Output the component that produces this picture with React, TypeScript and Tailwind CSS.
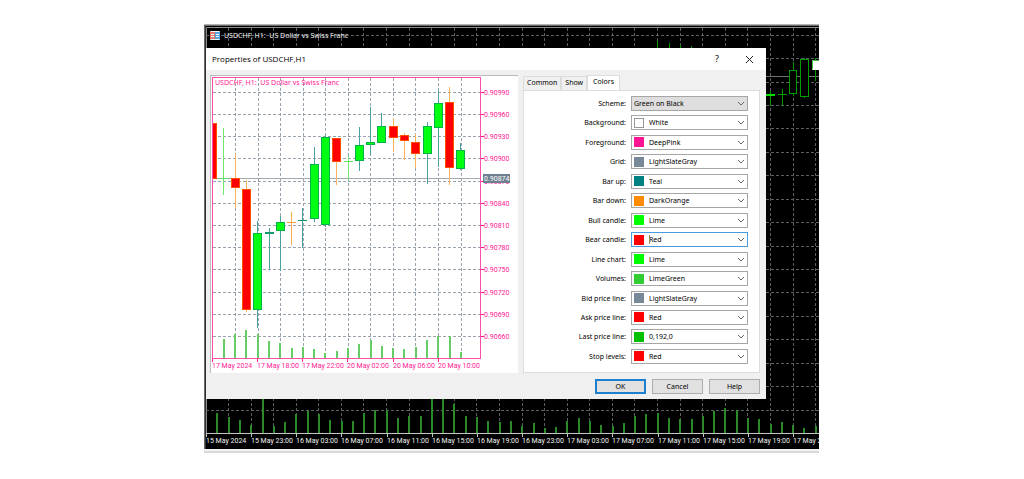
import { useState } from "react";

type Candle = { x: number; hi: number; lo: number; top: number; bottom: number; kind: "up" | "down" | "flat" | "lime" | "orange" };

const previewCandles: Candle[] = [
  { x: 223, hi: 128, lo: 195, top: 178, bottom: 179, kind: "lime" },
  { x: 235, hi: 154, lo: 208, top: 178, bottom: 188, kind: "down" },
  { x: 246, hi: 180, lo: 312, top: 189, bottom: 310, kind: "down" },
  { x: 257, hi: 221, lo: 328, top: 233, bottom: 310, kind: "up" },
  { x: 269, hi: 228, lo: 270, top: 232, bottom: 234, kind: "flat" },
  { x: 280, hi: 216, lo: 271, top: 222, bottom: 231, kind: "up" },
  { x: 291, hi: 212, lo: 245, top: 222, bottom: 223, kind: "orange" },
  { x: 302, hi: 208, lo: 248, top: 220, bottom: 221, kind: "flat" },
  { x: 314, hi: 147, lo: 222, top: 164, bottom: 219, kind: "up" },
  { x: 325, hi: 135, lo: 227, top: 137, bottom: 225, kind: "up" },
  { x: 336, hi: 138, lo: 185, top: 138, bottom: 162, kind: "down" },
  { x: 348, hi: 156, lo: 180, top: 161, bottom: 162, kind: "lime" },
  { x: 359, hi: 127, lo: 171, top: 145, bottom: 161, kind: "up" },
  { x: 370, hi: 107, lo: 155, top: 142, bottom: 145, kind: "up" },
  { x: 381, hi: 113, lo: 143, top: 126, bottom: 143, kind: "up" },
  { x: 393, hi: 118, lo: 152, top: 126, bottom: 138, kind: "down" },
  { x: 404, hi: 133, lo: 160, top: 135, bottom: 141, kind: "down" },
  { x: 415, hi: 134, lo: 168, top: 142, bottom: 154, kind: "down" },
  { x: 427, hi: 122, lo: 184, top: 126, bottom: 154, kind: "up" },
  { x: 438, hi: 91, lo: 167, top: 103, bottom: 128, kind: "up" },
  { x: 449, hi: 87, lo: 185, top: 102, bottom: 168, kind: "down" },
  { x: 460, hi: 143, lo: 170, top: 150, bottom: 169, kind: "up" },
];

const previewVolumes = [339, 334, 330, 334, 341, 343, 348, 347, 349, 353, 351, 348, 344, 340, 346, 348, 349, 347, 340, 336, 336, 352];
const previewTimes = ["17 May 2024", "17 May 18:00", "17 May 22:00", "20 May 02:00", "20 May 06:00", "20 May 10:00"];
const prices = ["0.90990", "0.90960", "0.90930", "0.90900", "0.90870", "0.90840", "0.90810", "0.90780", "0.90750", "0.90720", "0.90690", "0.90660"];

const volumes = [
  413, 417, 420, 425, 399, 426, 422, 414, 411, 414, 420, 421, 421, 413, 410, 410, 418, 416, 416, 399, 399, 404, 416, 417, 421, 422, 421,
  426, 423, 428, 427, 421, 418, 421, 425, 426, 423, 416, 414, 413, 418, 419, 419, 416, 411, 408, 410, 418, 419, 424, 422, 425, 428, 426,
];
const times = [
  "15 May 2024", "15 May 23:00", "16 May 03:00", "16 May 07:00", "16 May 11:00", "16 May 15:00", "16 May 19:00",
  "16 May 23:00", "17 May 03:00", "17 May 07:00", "17 May 11:00", "17 May 15:00", "17 May 19:00", "17 May 23:00",
];

const wickColor = { up: "#4aa09c", flat: "#4aa09c", down: "#f7b45c", lime: "#6fe86f", orange: "#f5ad4e" };
const edgeColor = { up: "#00b048", flat: "#109a70", down: "#ff5000", lime: "#5ce05c", orange: "#e8a030" };

function CandleShape({ c }: { c: Candle }) {
  const body = c.kind === "up" || c.kind === "down";
  return (
    <g>
      <rect x={c.x} y={c.hi} width="1" height={c.lo - c.hi} fill={wickColor[c.kind]} />
      {body ? (
        <>
          <rect x={c.x - 4} y={c.top} width="9" height={c.bottom - c.top} fill={edgeColor[c.kind]} />
          <rect x={c.x - 3} y={c.top + 1} width="7" height={c.bottom - c.top - 2} fill={c.kind === "up" ? "#00ff10" : "#ff0000"} />
        </>
      ) : (
        <rect x={c.x - 4} y={c.top} width="9" height={c.bottom - c.top} fill={edgeColor[c.kind]} />
      )}
    </g>
  );
}

function MarketChart() {
  return (
    <svg viewBox="204 24 615 425" preserveAspectRatio="xMinYMin slice" className="block h-[425px] w-full" role="img" aria-label="USDCHF, H1 chart">
      <rect x="204" y="24" width="620" height="425" fill="#000" />
      <rect x="204" y="24" width="620" height="1" fill="#b4b4b4" />
      <rect x="204" y="25" width="620" height="1" fill="#6a6e6a" />
      <rect x="204" y="25" width="1" height="424" fill="#6a6a6a" />
      <rect x="205" y="26" width="1" height="423" fill="#303030" />
      <path d="M206.5 433V27.5H820" fill="none" stroke="#8a8f8a" />
      <g stroke="#5c6064" strokeDasharray="3 2">
        {Array.from({ length: 27 }, (_, i) => {
          const x = Math.round(228 + i * 22.58) + 0.5;
          return <line key={i} x1={x} x2={x} y1="28" y2="433" />;
        })}
        {Array.from({ length: 17 }, (_, i) => {
          const y = Math.floor(35.3 + i * 23.42) + 0.5;
          return <line key={i} x1="206" x2="820" y1={y} y2={y} />;
        })}
      </g>
      <line x1="206" x2="820" y1="76.5" y2="76.5" stroke="#6e7276" />
      <g stroke="#009a00" fill="#000">
        <path d="M657.5 41V50M669.5 43V50M680.5 45V50M691.5 46V50" />
        <path d="M770.5 91V106M782.5 89V106M778 94.500H787M793.5 62V96M804.5 58V98M815.5 58V81" />
        <path d="M766 95H775" stroke="#00e000" strokeWidth="2" />
        <rect x="789.5" y="70.500" width="7" height="23" />
        <rect x="800.5" y="59.500" width="8" height="37" />
        <rect x="812" y="60" width="8" height="10" fill="#fff" stroke="none" />
        <path d="M812.500 69.500V60.500H820" fill="none" stroke="#40c840" />
      </g>
      {volumes.map((y, i) => (
        <rect key={i} x={Math.round(216.4 + i * 11.29)} y={y} width="2" height={433 - y} fill="#2a8a2a" />
      ))}
      <line x1="206" x2="820" y1="433.5" y2="433.5" stroke="#c4c4c4" />
      <rect x="210" y="31" width="10" height="9" rx="1" fill="#f3f6fa" />
      <rect x="210" y="32" width="5" height="7" fill="#e07a68" />
      <rect x="215" y="32" width="5" height="7" fill="#57a4dc" />
      <path d="M211 34.500H214M216 34.500H219M211 36.500H214M216 36.500H219" stroke="#f3f6fa" />
      <text x="224" y="38" fill="#f2f2f2" className="font-['Noto_Sans',sans-serif] text-[7px]">
        USDCHF, H1:&nbsp; US Dollar vs Swiss Franc
      </text>
      <g className="font-['Roboto',sans-serif] text-[7px]" fill="#f2f2f2">
        {times.map((t, i) => (
          <g key={t}>
            <rect x={Math.round(206 + i * 45.16)} y="433" width="1" height="4" fill="#c4c4c4" />
            <text x={Math.round(206 + i * 45.16)} y="443">{t}</text>
          </g>
        ))}
      </g>
    </svg>
  );
}

function PreviewChart() {
  return (
    <svg viewBox="211 76 307 297" preserveAspectRatio="xMinYMin meet" className="block h-[297px] w-full" role="img" aria-label="Colour scheme preview">
      <g stroke="#98a2ac" strokeDasharray="3 2">
        {Array.from({ length: 11 }, (_, i) => {
          const x = Math.round(235 + i * 22.56) + 0.5;
          return <line key={i} x1={x} x2={x} y1="78" y2="358" />;
        })}
        {prices.map((p, i) => {
          const y = Math.round(91.6 + i * 22.23) + 0.5;
          return <line key={p} x1="213" x2="481" y1={y} y2={y} />;
        })}
      </g>
      <line x1="213" x2="481" y1="178.500" y2="178.500" stroke="#a2a8ae" />
      {previewVolumes.map((y, i) => (
        <rect key={i} x={Math.round(222.800 + i * 11.29)} y={y} width="2" height={358 - y} fill="#66cc66" />
      ))}
      <rect x="213" y="123" width="4" height="56" fill="#ff5000" />
      <rect x="213" y="124" width="3" height="54" fill="#ff0000" />
      {previewCandles.map((c) => (
        <CandleShape key={c.x} c={c} />
      ))}
      <rect x="212.5" y="77.5" width="268" height="281" fill="none" stroke="#ff4fae" />
      <text x="215" y="85" fill="#ff1a94" className="font-['Noto_Sans',sans-serif] text-[7px]">
        USDCHF, H1:&nbsp; US Dollar vs Swiss Franc
      </text>
      <g className="font-['Roboto',sans-serif] text-[7px]" fill="#ff1a94">
        {prices.map((p, i) => {
          const y = Math.round(91.6 + i * 22.23);
          return (
            <g key={p}>
              <rect x="481" y={y} width="3" height="1" />
              <text x="484" y={y + 3}>{p}</text>
            </g>
          );
        })}
        <rect x="483" y="174" width="27" height="9" fill="#6d7f90" />
        <text x="484" y="181" fill="#fff">0.90874</text>
        {previewTimes.map((t, i) => (
          <g key={t}>
            <rect x={Math.round(212 + i * 45.16)} y="359" width="1" height="3" />
            <text x={Math.round(212 + i * 45.16)} y="368">{t}</text>
          </g>
        ))}
      </g>
    </svg>
  );
}

type Field = { label: string; value: string; swatch?: string; active?: boolean };

const fields: Field[] = [
  { label: "Scheme", value: "Green on Black" },
  { label: "Background", value: "White", swatch: "bg-white border border-[#999999]" },
  { label: "Foreground", value: "DeepPink", swatch: "bg-[#ff1493]" },
  { label: "Grid", value: "LightSlateGray", swatch: "bg-[#778899]" },
  { label: "Bar up", value: "Teal", swatch: "bg-[#008080]" },
  { label: "Bar down", value: "DarkOrange", swatch: "bg-[#ff8c00]" },
  { label: "Bull candle", value: "Lime", swatch: "bg-[#00ff00]" },
  { label: "Bear candle", value: "Red", swatch: "bg-[#ff0000]", active: true },
  { label: "Line chart", value: "Lime", swatch: "bg-[#00ff00]" },
  { label: "Volumes", value: "LimeGreen", swatch: "bg-[#32cd32]" },
  { label: "Bid price line", value: "LightSlateGray", swatch: "bg-[#778899]" },
  { label: "Ask price line", value: "Red", swatch: "bg-[#ff0000]" },
  { label: "Last price line", value: "0,192,0", swatch: "bg-[#00c000]" },
  { label: "Stop levels", value: "Red", swatch: "bg-[#ff0000]" },
];

function ColorField({ field }: { field: Field }) {
  const id = field.label.toLowerCase().replace(/ /g, "-");
  const border = field.active ? "border-[#4a9be0]" : "border-[#a6a6a6]";
  const fill = field.swatch ? "bg-white" : "bg-[#dedede]";
  return (
    <div className="flex h-[15px] items-center gap-[5px]">
      <label htmlFor={id} className="flex-1 text-right leading-[15px]">{field.label}:</label>
      <div className={`grid h-[15px] w-[117px] items-center border ${border} ${fill}`}>
        <select
          id={id}
          defaultValue={field.value}
          className={`col-start-1 row-start-1 h-[13px] w-full appearance-none bg-transparent leading-[13px] outline-none ${field.swatch ? "pl-[17px]" : "pl-[2px]"}`}
        >
          <option>{field.value}</option>
        </select>
        {field.swatch && <span className={`pointer-events-none col-start-1 row-start-1 ml-[2px] size-[10px] ${field.swatch}`} />}
        {field.active && <span className="pointer-events-none col-start-1 row-start-1 ml-[17px] h-[9px] w-px bg-[#b08a40]" />}
        <svg viewBox="0 0 8 5" className="pointer-events-none col-start-1 row-start-1 mr-[2px] h-[5px] w-[8px] justify-self-end" fill="none" stroke="#666">
          <path d="M1 1L4 4L7 1" />
        </svg>
      </div>
    </div>
  );
}

const tabs = ["Common", "Show", "Colors"];

export default function App() {
  const [tab, setTab] = useState("Colors");
  return (
    <main className="min-h-screen bg-white pt-[24px] pr-[205px] pl-[204px] font-['Noto_Sans',sans-serif] text-[7px] text-black">
      <div className="relative w-full overflow-hidden">
        <MarketChart />
        <div className="h-[2px] bg-[#f4f4f4]" />
        <div className="h-[2px] bg-[#d8d8d8]" />

        <section role="dialog" aria-labelledby="dialog-title" className="absolute top-[24px] left-[2px] flex w-[560px] flex-col bg-[#f0f0f0]">
          <header className="flex h-[22px] items-center bg-white pr-[12px] pl-[6px] text-[8px]">
            <h1 id="dialog-title" className="flex-1 font-['Open_Sans',sans-serif]">Properties of USDCHF,H1</h1>
            <button type="button" aria-label="Help about this window" className="mr-[24px] w-[8px] text-center text-[9px]">?</button>
            <button type="button" aria-label="Close" className="size-[9px]">
              <svg viewBox="0 0 9 9" className="size-[9px]" stroke="#222" fill="none">
                <path d="M1 1L8 8M8 1L1 8" />
              </svg>
            </button>
          </header>

          <div className="flex gap-[5px] pt-[5px] pr-[6px] pl-[4px]">
            <div className="min-w-0 flex-1 border-t border-l border-[#bcbcbc] bg-white">
              <PreviewChart />
            </div>
            <div className="flex w-[237px] flex-col">
              <div role="tablist" className="flex items-end">
                {tabs.map((t) => (
                  <button
                    key={t}
                    type="button"
                    role="tab"
                    aria-selected={t === tab}
                    onClick={() => setTab(t)}
                    className={
                      t === tab
                        ? "-mb-px h-[16px] border border-b-0 border-[#dcdcdc] bg-white px-[5px] pb-[2px]"
                        : "h-[14px] border border-b-0 border-[#dcdcdc] bg-[#f0f0f0] px-[3px]"
                    }
                  >
                    {t}
                  </button>
                ))}
              </div>
              <form className="flex flex-1 flex-col justify-between border border-[#dcdcdc] bg-white pt-[5px] pr-[11px] pb-[8px]">
                {fields.map((f) => (
                  <ColorField key={f.label} field={f} />
                ))}
              </form>
            </div>
          </div>

          <footer className="flex justify-end gap-[6px] pt-[6px] pr-[6px] pb-[5px]">
            <button type="button" className="h-[15px] w-[51px] border-2 border-[#1c80d0] bg-[#e1e1e1] leading-[11px]">OK</button>
            <button type="button" className="h-[15px] w-[51px] border border-[#adadad] bg-[#e1e1e1] leading-[13px]">Cancel</button>
            <button type="button" className="h-[15px] w-[51px] border border-[#adadad] bg-[#e1e1e1] leading-[13px]">Help</button>
          </footer>
        </section>
      </div>
    </main>
  );
}
